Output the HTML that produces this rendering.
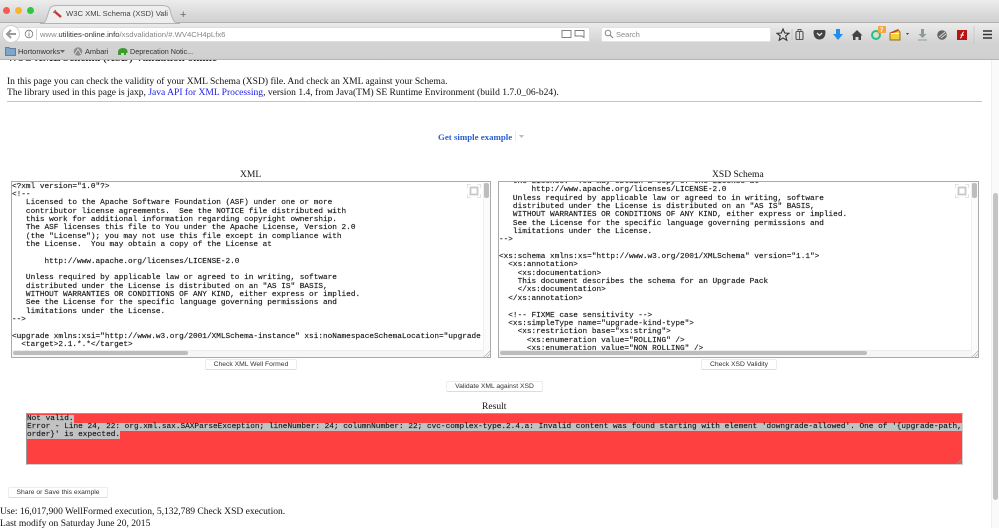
<!DOCTYPE html>
<html><head><meta charset="utf-8">
<style>
*{box-sizing:border-box}
html,body{margin:0;padding:0;width:999px;height:528px;overflow:hidden;background:#fff}
body{position:relative;font-family:"Liberation Serif",serif;color:#111;filter:blur(.3px)}
.a{position:absolute;white-space:pre}
.s{font-family:"Liberation Sans",sans-serif}
.t{font-size:9.55px;line-height:12px;height:12px}
pre{margin:0;font-family:"Liberation Mono",monospace;font-size:7.74px;line-height:8.34px;color:#111;-webkit-text-stroke:.15px #222;position:absolute;white-space:pre}
.box{position:absolute;background:#fff;border:1px solid #aaa;overflow:hidden}
.btn{position:absolute;background:#fff;border:1px solid #ececec;border-bottom-color:#dcdcdc;border-radius:2px;font:6.75px/9px "Liberation Sans",sans-serif;color:#333;text-align:center;height:11px}
.hb{position:absolute;background:#bdbdbd;height:4px;border-radius:2px}
.vb{position:absolute;background:#bdbdbd;width:5px;border-radius:2px}
sel{background:#c2c2c2}
</style></head><body>

<!-- browser chrome -->
<div class="a" style="left:0;top:0;width:999px;height:23px;background:linear-gradient(#ececec,#d0d0d0);border-bottom:1px solid #b0b0b0"></div>
<div class="a" style="left:0;top:23px;width:999px;height:37px;background:linear-gradient(#ebebeb,#d3d3d3 55%,#d0d0d0);border-bottom:1px solid #b5b5b5"></div>
<div class="a" style="left:3px;top:7px;width:7px;height:7px;border-radius:50%;background:#f25c52"></div>
<div class="a" style="left:15px;top:7px;width:7px;height:7px;border-radius:50%;background:#f5b52d"></div>
<div class="a" style="left:27px;top:7px;width:7px;height:7px;border-radius:50%;background:#2ec840"></div>
<svg class="a" style="left:40px;top:4px" width="145" height="20"><path d="M0 19.500 C6 19.500 6 16 8 10 C10 3 11 1.500 17 1.500 H122 C128 1.500 130 3 131 10 C133 16 134 19.500 140 19.500 Z" fill="#eeeeee" stroke="#b3b3b3"/></svg>
<svg class="a" style="left:53px;top:9px" width="10" height="10"><path d="M1 2 L8 8" stroke="#c9302c" stroke-width="2.200"/><path d="M0 4 L3 1" stroke="#888" stroke-width="1"/></svg>
<div class="a s" style="left:66px;top:9px;font-size:7.650px;line-height:10px;color:#444">W3C XML Schema (XSD) Vali</div>
<div class="a s" style="left:161px;top:9px;font-size:7.500px;line-height:10px;color:#999">×</div>
<div class="a s" style="left:180px;top:9px;font-size:11px;line-height:12px;color:#666">+</div>

<div class="a" style="left:6px;top:27px;width:584px;height:15px;background:#fff;border:1px solid #dddddd;border-radius:2px"></div>
<div class="a" style="left:2px;top:25px;width:18px;height:18px;border-radius:50%;background:#fff;border:1px solid #d0d0d0"></div>
<svg class="a" style="left:5px;top:29px" width="12" height="10"><path d="M6 1 L2 5 L6 9 M2 5 H11" fill="none" stroke="#9a9a9a" stroke-width="2"/></svg>
<svg class="a" style="left:24px;top:29px" width="10" height="10"><circle cx="5" cy="5" r="3.800" fill="none" stroke="#777" stroke-width=".8"/><path d="M5 4.300 V7.500 M5 2.500 V3.500" stroke="#777" stroke-width=".9"/></svg>
<div class="a" style="left:36px;top:29px;width:1px;height:11px;background:#d0d0d0"></div>
<div class="a s" style="left:40px;top:30px;font-size:7.700px;line-height:10px;color:#888">www.<span style="color:#333">utilities-online.info</span>/xsdvalidation/#.WV4CH4pLfx6</div>
<svg class="a" style="left:561px;top:29px" width="26" height="10"><rect x="1" y="1.500" width="9" height="7" fill="none" stroke="#777" stroke-width=".9"/><path d="M14 1.500 h9 v7 l-2 -1.500 h-7 z" fill="none" stroke="#777" stroke-width=".9"/></svg>

<div class="a" style="left:601px;top:27px;width:170px;height:15px;background:#fff;border:1px solid #e2e2e2;border-radius:2px"></div>
<svg class="a" style="left:604px;top:29px" width="10" height="10"><circle cx="4" cy="4" r="2.800" fill="none" stroke="#888" stroke-width="1"/><path d="M6 6 L9 9" stroke="#888" stroke-width="1.200"/></svg>
<div class="a s" style="left:616px;top:30px;font-size:7.500px;line-height:10px;color:#8a8a8a">Search</div>

<svg class="a" style="left:776px;top:26px" width="223" height="18">
<path d="M7 3 L8.700 7 L13 7.300 L9.700 10 L10.800 14.200 L7 12 L3.200 14.200 L4.300 10 L1 7.300 L5.300 7 Z" fill="none" stroke="#333" stroke-width="1.100"/>
<path d="M16 3 V14" stroke="#bbb" stroke-width=".8"/>
<rect x="20" y="5.500" width="7" height="8" rx="1" fill="none" stroke="#555" stroke-width="1.100"/><path d="M22 5 V3.500 H25 V5 M23.500 6 V13" stroke="#555" stroke-width=".9" fill="none"/>
<path d="M39 4 H48 Q49.500 4 49.500 6 C49.500 11 47 13.500 43.500 13.500 C40 13.500 37.500 11 37.500 6 Q37.500 4 39 4 Z" fill="#444"/><path d="M41 7 L43.500 9.500 L46 7" fill="none" stroke="#eee" stroke-width="1.300"/>
<path d="M60 3 H64 V8 H67 L62 14 L57 8 H60 Z" fill="#1e8ef0"/>
<path d="M81 4 L86.500 9.500 H85 V14 H82.500 V11 H79.500 V14 H77 V9.500 H75.500 Z" fill="#444"/>
<circle cx="100" cy="9" r="4" fill="none" stroke="#27c27a" stroke-width="2"/><rect x="102" y="0" width="8" height="7" rx="1" fill="#f5a640"/><text x="104" y="6" font-size="6" font-family="Liberation Sans" font-weight="bold" fill="#fff">7</text>
<path d="M114 7 L122 3.500 L124 6 V14 H114 Z" fill="#f5cf3b" stroke="#8a6a20" stroke-width=".9"/><path d="M115 7 L122 4.500" stroke="#d33" stroke-width="1.200"/><path d="M115 7.500 H123" stroke="#fff" stroke-width="1"/>
<path d="M130 7 H133 L131.500 9 Z" fill="#444"/>
<path d="M145 3 H148 V8 H150.500 L146.500 12 L142.500 8 H145 Z" fill="#8b9a9a"/><path d="M142 14 H151" stroke="#9aa" stroke-width="1.200"/>
<circle cx="166" cy="9" r="4.800" fill="#666"/><path d="M163 11 L169 6 M165 12 L170 8" stroke="#ddd" stroke-width=".9"/>
<rect x="181" y="4" width="10" height="10" fill="#b81414"/><path d="M188 6 C185.500 6 186.500 12 184 12 M184.500 9 H188" fill="none" stroke="#fff" stroke-width="1"/>
<path d="M198 0 V18" stroke="#c6c6c6" stroke-width=".8"/>
<path d="M207 5 H216 M207 8.500 H216 M207 12 H216" stroke="#333" stroke-width="1.500"/>
</svg>

<!-- bookmarks -->
<svg class="a" style="left:5px;top:46px" width="11" height="10"><path d="M.500 1.500 H4 L5 2.500 H10.500 V9.500 H.500 Z" fill="#7fa6c9" stroke="#4d6f8e" stroke-width=".8"/></svg>
<div class="a s" style="left:18px;top:47px;font-size:7.500px;line-height:10px;color:#333">Hortonworks</div>
<svg class="a" style="left:60px;top:50px" width="5" height="3"><path d="M0 0 H5 L2.500 3 Z" fill="#666"/></svg>
<svg class="a" style="left:73px;top:47px" width="10" height="9"><circle cx="5" cy="4.500" r="4.300" fill="#8d8d8d"/><path d="M2 7 L5 2 L8 7" fill="none" stroke="#ddd" stroke-width=".8"/></svg>
<div class="a s" style="left:85px;top:47px;font-size:7.400px;line-height:10px;color:#333">Ambari</div>
<svg class="a" style="left:117px;top:47px" width="11" height="9"><path d="M1 8 V4 Q2 1 6 1 Q10 1 10.500 4 L10.500 6 H9 V8 H7 V6 H4 V8 Z" fill="#3f9a2d"/></svg>
<div class="a s" style="left:130px;top:47px;font-size:7.200px;line-height:10px;color:#333">Deprecation Notic...</div>

<!-- page -->
<div class="a" style="left:0;top:60px;width:999px;height:468px;overflow:hidden">
  <div class="a" style="left:7px;top:-8px;font-size:11.200px;line-height:12px;color:#222;font-weight:bold">W3C XML Schema (XSD) Validation online</div>
</div>
<div class="a t" style="left:7px;top:75.500px">In this page you can check the validity of your XML Schema (XSD) file. And check an XML against your Schema.</div>
<div class="a t" style="left:7px;top:86.500px">The library used in this page is jaxp, <span style="color:#1a1ae6">Java API for XML Processing</span>, version 1.4, from Java(TM) SE Runtime Environment (build 1.7.0_06-b24).</div>
<div class="a" style="left:7px;top:101px;width:975px;height:1px;background:#c4c4c4"></div>

<div class="a" style="left:438px;top:132px;font-size:8.850px;line-height:11px;font-weight:bold;color:#2a5fd0">Get simple example</div>
<div class="a" style="left:515px;top:131px;width:1px;height:10px;background:#ececec"></div>
<svg class="a" style="left:519px;top:135px" width="6" height="4"><path d="M0 0 H5 L2.500 3 Z" fill="#bbb"/></svg>

<div class="a" style="left:240px;top:169px;font-size:9.550px;line-height:12px">XML</div>
<div class="a" style="left:712px;top:169px;font-size:9.550px;line-height:12px">XSD Schema</div>

<div class="box" style="left:11px;top:181px;width:480px;height:177px">
<pre style="left:0;top:0.500px">&lt;?xml version="1.0"?&gt;
&lt;!--
   Licensed to the Apache Software Foundation (ASF) under one or more
   contributor license agreements.  See the NOTICE file distributed with
   this work for additional information regarding copyright ownership.
   The ASF licenses this file to You under the Apache License, Version 2.0
   (the "License"); you may not use this file except in compliance with
   the License.  You may obtain a copy of the License at

       http://www.apache.org/licenses/LICENSE-2.0

   Unless required by applicable law or agreed to in writing, software
   distributed under the License is distributed on an "AS IS" BASIS,
   WITHOUT WARRANTIES OR CONDITIONS OF ANY KIND, either express or implied.
   See the License for the specific language governing permissions and
   limitations under the License.
--&gt;

&lt;upgrade xmlns:xsi="http://www.w3.org/2001/XMLSchema-instance" xsi:noNamespaceSchemaLocation="upgrade
  &lt;target&gt;2.1.*.*&lt;/target&gt;</pre>
<div class="a" style="left:0;top:168px;width:478px;height:7px;background:#f6f6f6;border-top:1px solid #ededed"></div>
<div class="a" style="left:471px;top:0;width:7px;height:175px;background:#fbfbfb;border-left:1px solid #f0f0f0"></div>
<svg class="a" style="left:455px;top:1.500px" width="14" height="14"><path d="M0 4 V0 H4 M10 0 H14 V4 M14 10 V14 H10 M4 14 H0 V10" fill="none" stroke="#d8d8d8" stroke-width="1.400"/><rect x="3.500" y="3.500" width="7" height="7" fill="none" stroke="#c8c8c8" stroke-width="1.800"/></svg>
<div class="vb" style="left:472px;top:1px;height:15px"></div>
<div class="hb" style="left:1px;top:169px;width:175px"></div>
<svg class="a" style="left:471px;top:168px" width="8" height="8"><path d="M1 7 L7 1 M4 7 L7 4" stroke="#aaa" stroke-width=".7"/></svg>
</div>

<div class="box" style="left:498px;top:181px;width:481px;height:177px">
<pre style="left:0;top:-4px">   the License.  You may obtain a copy of the License at
       http://www.apache.org/licenses/LICENSE-2.0
   Unless required by applicable law or agreed to in writing, software
   distributed under the License is distributed on an "AS IS" BASIS,
   WITHOUT WARRANTIES OR CONDITIONS OF ANY KIND, either express or implied.
   See the License for the specific language governing permissions and
   limitations under the License.
--&gt;

&lt;xs:schema xmlns:xs="http://www.w3.org/2001/XMLSchema" version="1.1"&gt;
  &lt;xs:annotation&gt;
    &lt;xs:documentation&gt;
    This document describes the schema for an Upgrade Pack
    &lt;/xs:documentation&gt;
  &lt;/xs:annotation&gt;

  &lt;!-- FIXME case sensitivity --&gt;
  &lt;xs:simpleType name="upgrade-kind-type"&gt;
    &lt;xs:restriction base="xs:string"&gt;
      &lt;xs:enumeration value="ROLLING" /&gt;
      &lt;xs:enumeration value="NON_ROLLING" /&gt;</pre>
<div class="a" style="left:0;top:168px;width:479px;height:7px;background:#f6f6f6;border-top:1px solid #ededed"></div>
<div class="a" style="left:472px;top:0;width:7px;height:175px;background:#fbfbfb;border-left:1px solid #f0f0f0"></div>
<svg class="a" style="left:456px;top:1.500px" width="14" height="14"><path d="M0 4 V0 H4 M10 0 H14 V4 M14 10 V14 H10 M4 14 H0 V10" fill="none" stroke="#d8d8d8" stroke-width="1.400"/><rect x="3.500" y="3.500" width="7" height="7" fill="none" stroke="#c8c8c8" stroke-width="1.800"/></svg>
<div class="vb" style="left:473px;top:1px;height:15px"></div>
<div class="hb" style="left:1px;top:169px;width:367px"></div>
<svg class="a" style="left:472px;top:168px" width="8" height="8"><path d="M1 7 L7 1 M4 7 L7 4" stroke="#aaa" stroke-width=".7"/></svg>
</div>

<div class="btn" style="left:205px;top:359px;width:92px">Check XML Well Formed</div>
<div class="btn" style="left:701px;top:359px;width:76px">Check XSD Validity</div>
<div class="btn" style="left:446px;top:381px;width:97px">Validate XML against XSD</div>

<div class="a" style="left:482px;top:400.500px;font-size:9.550px;line-height:12px">Result</div>
<div class="box" style="left:26px;top:413px;width:937px;height:52px;background:#ff4040;border-color:#9a9a9a #d0d0d0 #d0d0d0 #9a9a9a">
<pre style="left:0;top:.5px;line-height:8.340px;font-size:7.750px"><sel>Not valid.</sel>
<sel>Error - Line 24, 22: org.xml.sax.SAXParseException; lineNumber: 24; columnNumber: 22; cvc-complex-type.2.4.a: Invalid content was found starting with element 'downgrade-allowed'. One of '{upgrade-path,</sel>
<sel>order}' is expected.</sel></pre>
<svg class="a" style="left:929px;top:44px" width="7" height="7"><path d="M0 7 L7 0 M3 7 L7 3" stroke="#999" stroke-width=".7"/></svg>
</div>

<div class="btn" style="left:8px;top:487px;width:100px">Share or Save this example</div>

<div class="a t" style="left:0;top:505.500px">Use: 16,017,900 WellFormed execution, 5,132,789 Check XSD execution.</div>
<div class="a t" style="left:0;top:517.500px">Last modify on Saturday June 20, 2015</div>

<!-- page scrollbar -->
<div class="a" style="left:991px;top:60px;width:8px;height:468px;background:#fafafa;border-left:1px solid #efefef"></div>
<div class="a" style="left:993px;top:193px;width:5px;height:307px;background:#c4c4c4;border-radius:3px"></div>
</body></html>
